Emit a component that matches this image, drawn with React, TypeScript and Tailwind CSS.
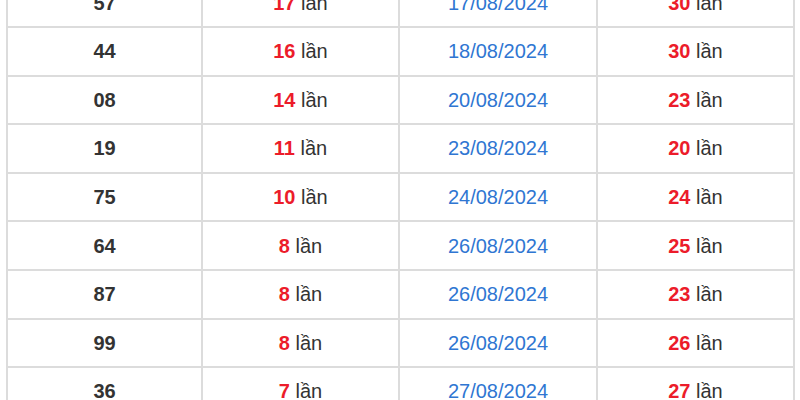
import React from "react";

const rows: [string, string, string, string][] = [
  ["57", "17", "17/08/2024", "30"],
  ["44", "16", "18/08/2024", "30"],
  ["08", "14", "20/08/2024", "23"],
  ["19", "11", "23/08/2024", "20"],
  ["75", "10", "24/08/2024", "24"],
  ["64", "8", "26/08/2024", "25"],
  ["87", "8", "26/08/2024", "23"],
  ["99", "8", "26/08/2024", "26"],
  ["36", "7", "27/08/2024", "27"],
];

export default function App() {
  return (
    <div
      className="w-[800px] h-[400px] overflow-hidden bg-white"
      style={{ fontFamily: '"Liberation Sans", Arial, sans-serif' }}
    >
      <div className="pl-[6px] -mt-[22.6px]">
        <table className="w-[789px] table-fixed border-collapse border-2 border-[#dcdcdc] text-[20px] text-[#333]">
          <colgroup>
            <col className="w-[195px]" />
            <col className="w-[197px]" />
            <col className="w-[198px]" />
            <col />
          </colgroup>
          <tbody>
            {rows.map((r, i) => (
              <tr key={i} className="h-[48.6px]">
                <td className="border-2 border-[#dcdcdc] text-center font-bold p-0">{r[0]}</td>
                <td className="border-2 border-[#dcdcdc] text-center p-0">
                  <span className="font-bold text-[#ec1c2a]">{r[1]}</span> lần
                </td>
                <td className="border-2 border-[#dcdcdc] text-center p-0 text-[#2f76d2]">{r[2]}</td>
                <td className="border-2 border-[#dcdcdc] text-center p-0">
                  <span className="font-bold text-[#ec1c2a]">{r[3]}</span> lần
                </td>
              </tr>
            ))}
          </tbody>
        </table>
      </div>
    </div>
  );
}
